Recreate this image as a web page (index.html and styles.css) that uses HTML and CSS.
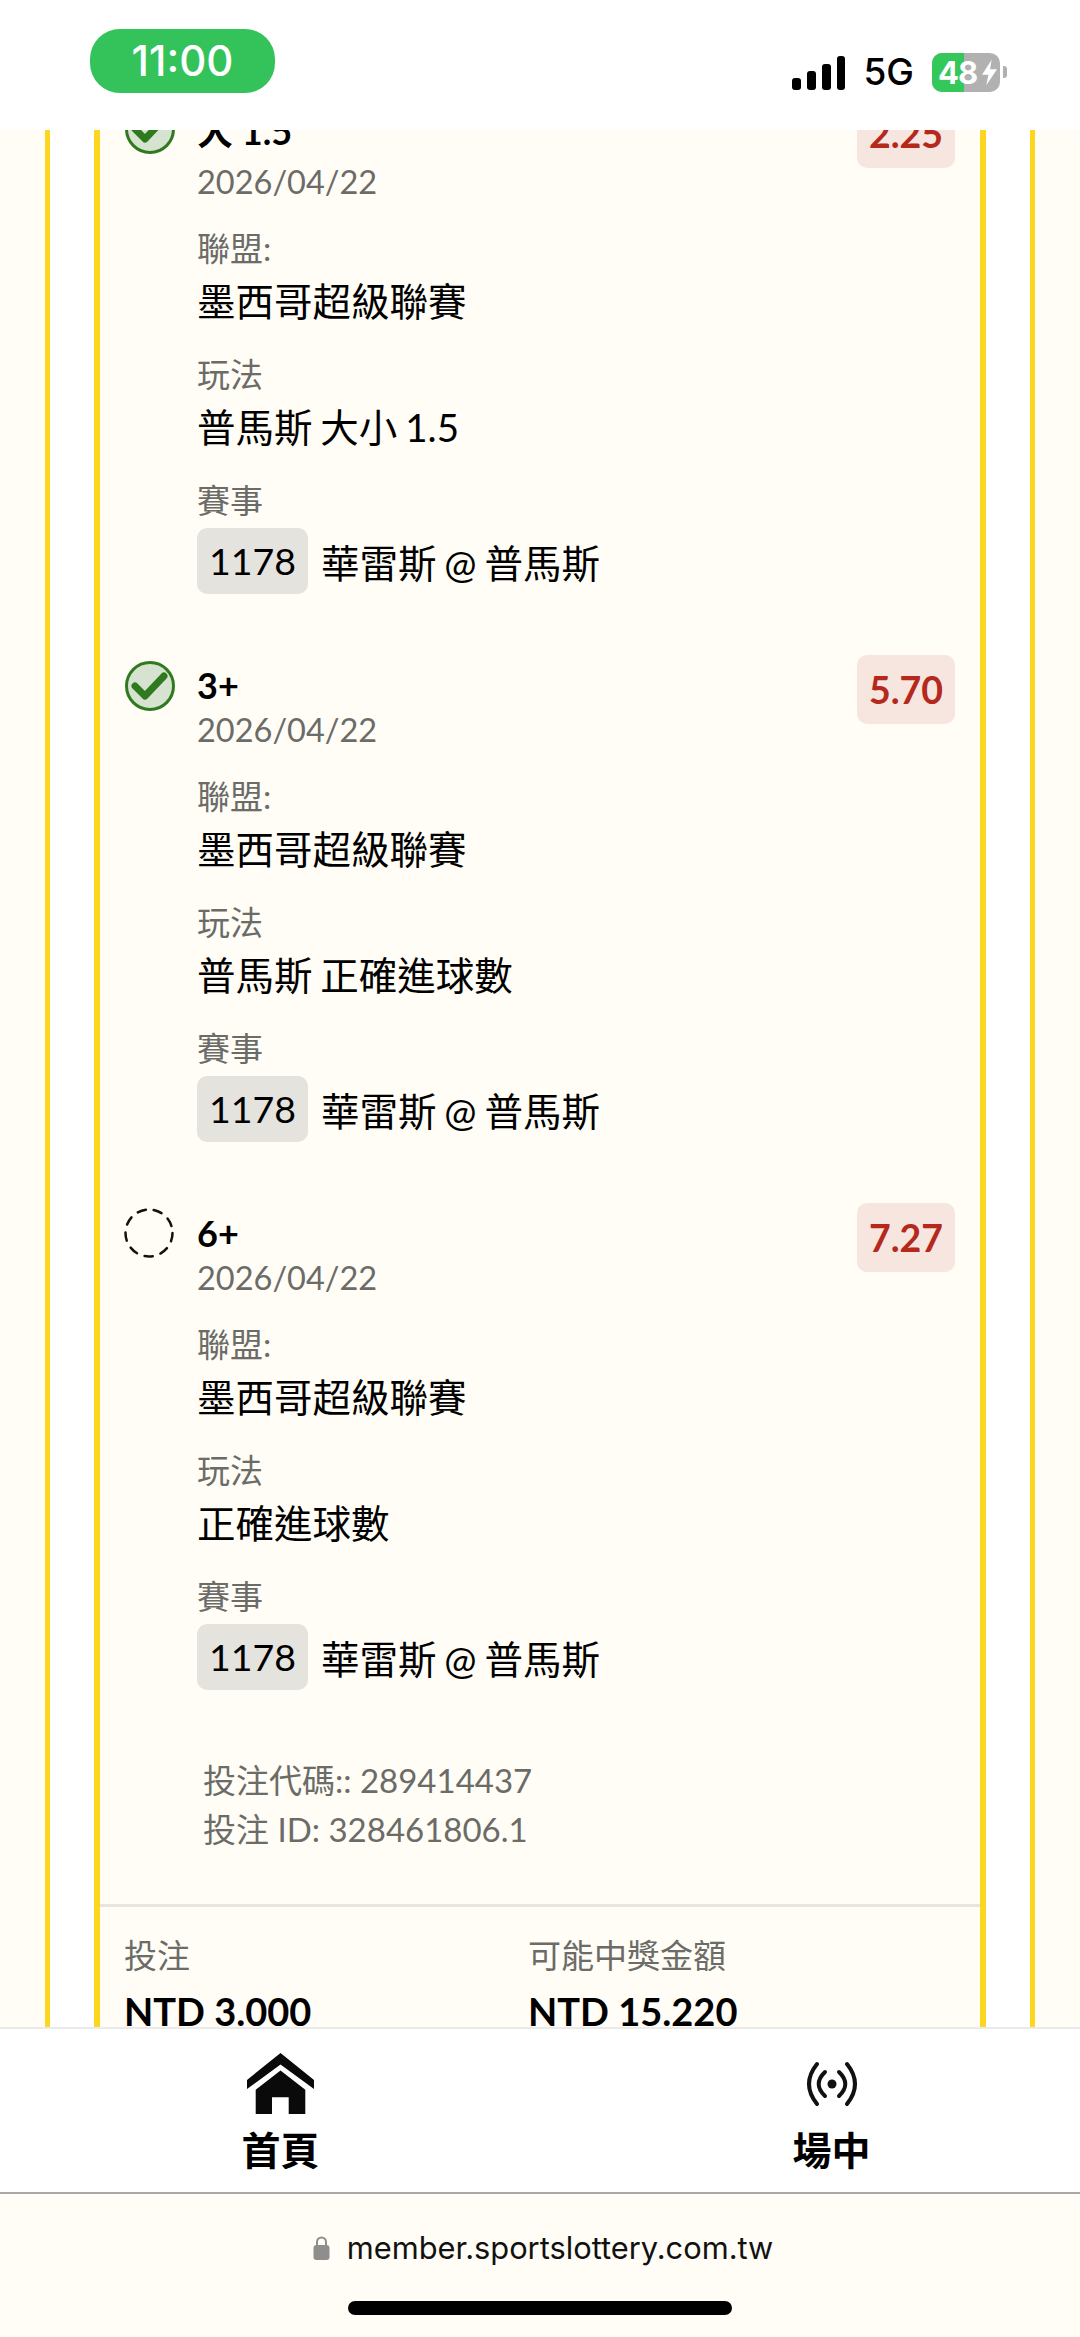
FILE: index.html
```html
<!DOCTYPE html>
<html lang="zh-Hant">
<head>
  <meta charset="UTF-8">
  <meta name="viewport" content="width=device-width, initial-scale=1.0">
  <title>投注明細</title>
  <link rel="stylesheet" href="styles.css">
</head>
<body>
  <header class="status">
    <div class="time">11:00</div>
    <div class="status-right">
      <svg class="signal" width="53" height="34" viewBox="0 0 53 34"><rect x="0" y="22" width="9" height="12" rx="3"/><rect x="15" y="15" width="9" height="19" rx="3"/><rect x="30" y="8" width="9" height="26" rx="3"/><rect x="45" y="0" width="8" height="34" rx="3"/></svg>
      <span class="net">5G</span>
      <div class="battery">
        <div class="battery-fill"></div>
        <span class="battery-num">48</span>
        <svg class="bolt" width="15" height="27" viewBox="0 0 14 24"><path d="M9 0 0 14h6l-2 10 10-15H7.500z"/></svg>
      </div>
      <div class="battery-tip"></div>
    </div>
  </header>

  <main class="viewport">
    <div class="outer">
      <div class="card">
        <div class="bets">
          <section class="bet">
            <svg class="mark mark-first" width="52" height="52" viewBox="0 0 52 52"><circle cx="26" cy="26" r="23.500" fill="#d6e3d0" stroke="#2f7a1f" stroke-width="3"/><path d="M11 26l10 10 L40 16" fill="none" stroke="#2f7a1f" stroke-width="7" stroke-linecap="round" stroke-linejoin="round"/></svg>
            <div class="bet-body">
              <div class="bet-name name-first">大 1.5</div>
              <div class="bet-date">2026/04/22</div>
              <div class="label">聯盟:</div>
              <div class="value">墨西哥超級聯賽</div>
              <div class="label">玩法</div>
              <div class="value">普馬斯 大小 1.5</div>
              <div class="label">賽事</div>
              <div class="match"><span class="chip">1178</span>華雷斯 @ 普馬斯</div>
            </div>
            <div class="odds odds-first">2.25</div>
          </section>
          <section class="bet">
            <svg class="mark" width="52" height="52" viewBox="0 0 52 52"><circle cx="26" cy="26" r="23.500" fill="#d6e3d0" stroke="#2f7a1f" stroke-width="3"/><path d="M11 26l10 10 L40 16" fill="none" stroke="#2f7a1f" stroke-width="7" stroke-linecap="round" stroke-linejoin="round"/></svg>
            <div class="bet-body">
              <div class="bet-name">3+</div>
              <div class="bet-date">2026/04/22</div>
              <div class="label">聯盟:</div>
              <div class="value">墨西哥超級聯賽</div>
              <div class="label">玩法</div>
              <div class="value">普馬斯 正確進球數</div>
              <div class="label">賽事</div>
              <div class="match"><span class="chip">1178</span>華雷斯 @ 普馬斯</div>
            </div>
            <div class="odds">5.70</div>
          </section>
          <section class="bet">
            <svg class="mark" width="52" height="52" viewBox="0 0 52 52"><circle cx="25" cy="25" r="23.500" fill="none" stroke="#111" stroke-width="2.500" stroke-dasharray="8.400 8" stroke-linecap="round"/></svg>
            <div class="bet-body">
              <div class="bet-name">6+</div>
              <div class="bet-date">2026/04/22</div>
              <div class="label">聯盟:</div>
              <div class="value">墨西哥超級聯賽</div>
              <div class="label">玩法</div>
              <div class="value">正確進球數</div>
              <div class="label">賽事</div>
              <div class="match"><span class="chip">1178</span>華雷斯 @ 普馬斯</div>
            </div>
            <div class="odds">7.27</div>
          </section>
        </div>
        <div class="codes">
          <div>投注代碼:: 289414437</div>
          <div>投注 ID: 328461806.1</div>
        </div>
        <div class="summary">
          <div class="sum-col">
            <div class="sum-label">投注</div>
            <div class="sum-value">NTD 3.000</div>
          </div>
          <div class="sum-col">
            <div class="sum-label">可能中獎金額</div>
            <div class="sum-value">NTD 15.220</div>
          </div>
        </div>
      </div>
    </div>
  </main>

  <nav class="tabs">
    <a class="tab">
      <svg width="67" height="61" viewBox="0 0 67 61" fill="#0a0a0a"><path d="M33.500 0 67 27v9L33.500 11.500 0 36v-9z"/><path d="M33.500 17.500 8.700 36.700V61H25V44.300h16.700V61h16.600V36.700z"/></svg>
      <span>首頁</span>
    </a>
    <a class="tab">
      <svg width="54" height="61" viewBox="0 0 54 61" fill="none" stroke="#111" stroke-width="4" stroke-linecap="round"><path d="M12 11Q-4 31 12 51"/><path d="M42 11Q58 31 42 51"/><path d="M20 19Q7.400 31 20 43"/><path d="M34 19Q46.600 31 34 43"/><circle cx="27" cy="31" r="4.500" fill="#111" stroke="none"/></svg>
      <span>場中</span>
    </a>
  </nav>

  <footer class="browser">
    <div class="url">
      <svg width="17" height="24" viewBox="0 0 16 24"><path d="M3.500 10V6a4.500 4.500 0 0 1 9 0v4" fill="none" stroke="#8e8e8e" stroke-width="2"/><rect x="0" y="9" width="16" height="15" rx="3" fill="#8e8e8e"/></svg>
      <span>member.sportslottery.com.tw</span>
    </div>
    <div class="home-bar"></div>
  </footer>
</body>
</html>
```

FILE: styles.css
```css
* { box-sizing: border-box; }
html, body { margin: 0; height: 100%; }
body { width: 1080px; height: 2337px; display: flex; flex-direction: column; background: #fffdf5; font-family: Lato, "Noto Sans CJK TC", sans-serif; color: #111; overflow: hidden; }

.status { flex: none; height: 130px; background: #fff; display: flex; justify-content: space-between; padding: 29px 73px 0 90px; }
.time { width: 185px; height: 64px; border-radius: 30px; background: #34c35a; color: #fff; font: 500 42px/64px Inter, sans-serif; text-align: center; }
.status-right { display: flex; align-items: center; height: 40px; margin-top: 23px; }
.signal { fill: #000; margin: 2px 18px 0 0; }
.net { font: 500 37px/40px Inter, sans-serif; color: #000; margin-right: 18px; }
.battery { position: relative; width: 68px; height: 39px; border-radius: 10px; background: #b1b1b1; overflow: hidden; display: flex; align-items: center; }
.battery-fill { position: absolute; left: 0; top: 0; bottom: 0; width: 32px; background: #34c75a; }
.battery-num { position: relative; color: #fff; font: 700 31px/39px Inter, sans-serif; margin-left: 6px; letter-spacing: -1px; }
.bolt { position: relative; flex: none; fill: #fff; margin-left: 5px; }
.battery-tip { width: 4px; height: 12px; background: #b1b1b1; border-radius: 0 3px 3px 0; margin-left: 3px; }

.viewport { flex: none; height: 1897px; overflow: hidden; }
.outer { margin: -23px 45px 0; padding: 0 44px; background: #fff; border-left: 5px solid #fdd71f; border-right: 5px solid #fdd71f; }
.card { background: #fffdf5; border-left: 6px solid #fdd71f; border-right: 6px solid #fdd71f; }
.bets { padding: 0 25px 0 24px; }
.bet { height: 548px; display: flex; align-items: flex-start; }
.mark { flex: none; margin: 5px 21px 0 0; }
.mark-first { margin-top: -4px; }
.bet-body { flex: 1; }
.bet-name { font-size: 36px; line-height: 46px; font-weight: 700; color: #000; margin-top: 7px; }
.name-first { margin-top: 1px; margin-bottom: 8px; }
.bet-date { font-size: 32.500px; line-height: 40px; color: #6b6b68; margin-top: 2px; }
.label { font-size: 33px; line-height: 44px; color: #6b6b68; margin-top: 24px; }
.value { font-size: 38.500px; line-height: 54px; color: #000; margin-top: 4px; word-spacing: -2px; }
.match { display: flex; align-items: center; font-size: 38.500px; color: #000; margin-top: 6px; word-spacing: -2px; }
.chip { background: #e5e3de; border-radius: 10px; width: 111px; height: 66px; line-height: 66px; text-align: center; margin-right: 13px; font-size: 37.500px; }
.odds { flex: none; width: 98px; height: 69px; background: #f7e6e0; border-radius: 10px; color: #b5281c; font-size: 37.500px; font-weight: 700; line-height: 69px; text-align: center; }
.odds-first { margin-top: -8px; }

.codes { padding: 0 24px 0 103px; margin-top: 5px; font-size: 33px; line-height: 49px; color: #6b6b68; }
.summary { display: flex; margin-top: 50px; padding: 25px 24px 0; border-top: 3px solid #e7e5e0; }
.sum-col { width: 404px; }
.sum-label { font-size: 33px; line-height: 46px; color: #6b6b68; }
.sum-value { font-size: 38px; line-height: 50px; font-weight: 700; color: #000; margin-top: 8px; }

.tabs { flex: none; height: 167px; background: #fff; border-top: 2px solid #eaeaea; border-bottom: 2px solid #a9a9a9; display: flex; padding-left: 5px; overflow: hidden; }
.tab { flex: none; width: 551px; height: 100%; display: flex; flex-direction: column; align-items: center; padding-top: 24px; font-size: 39px; font-weight: 700; line-height: 50px; color: #000; }
.tab svg { flex: none; }
.tab span { margin-top: 11px; }

.browser { flex: 1; display: flex; flex-direction: column; align-items: center; }
.url { display: flex; align-items: center; gap: 17px; margin-top: 34px; padding-left: 6px; height: 40px; font: 400 30.800px/40px Inter, sans-serif; color: #111; }
.home-bar { width: 384px; height: 14px; background: #000; border-radius: 7px; margin-top: 33px; }
```
